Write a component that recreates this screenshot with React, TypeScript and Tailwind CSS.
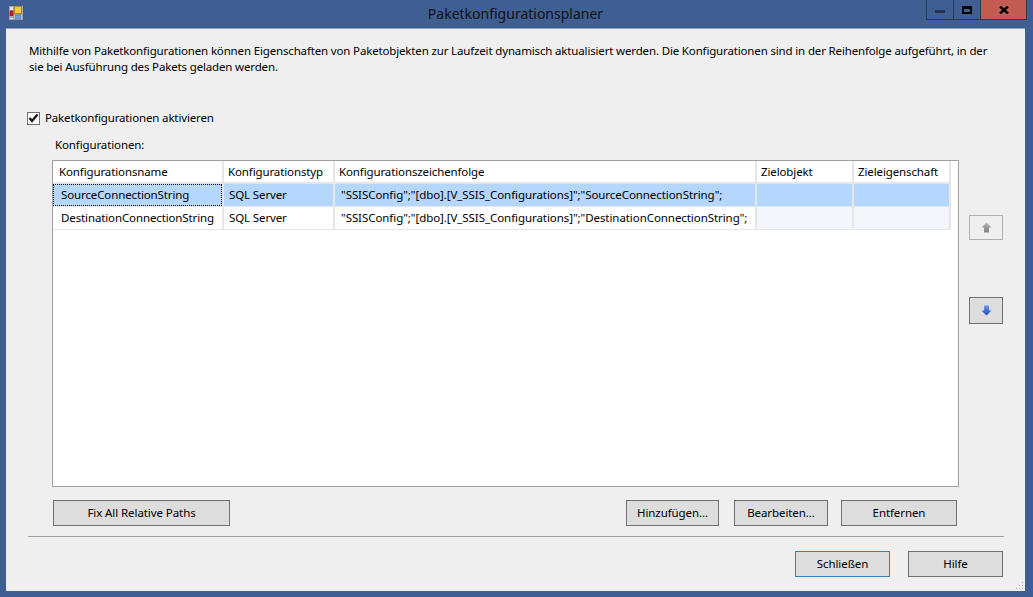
const font = { fontFamily: '"Noto Sans", sans-serif' }

const columns = [
  { label: 'Konfigurationsname', width: 'w-[171px]', head: 'pl-[6px]', cell: 'pl-[8px]' },
  { label: 'Konfigurationstyp', width: 'w-[111px]', head: 'pl-[4px]', cell: 'pl-[5px]' },
  { label: 'Konfigurationszeichenfolge', width: 'w-[422px]', head: 'pl-[4px]', cell: 'pl-[6px] tracking-[-0.065px]' },
  { label: 'Zielobjekt', width: 'w-[97px]', head: 'pl-[4px]', cell: 'pl-[6px]' },
  { label: 'Zieleigenschaft', width: 'w-[97px]', head: 'pl-[4px]', cell: 'pl-[6px]' },
]

const rows = [
  ['SourceConnectionString', 'SQL Server', '"SSISConfig";"[dbo].[V_SSIS_Configurations]";"SourceConnectionString";'],
  ['DestinationConnectionString', 'SQL Server', '"SSISConfig";"[dbo].[V_SSIS_Configurations]";"DestinationConnectionString";'],
]

function AppIcon() {
  return (
    <svg width="14" height="14" viewBox="0 0 14 14">
      <rect x="0.5" y="0.5" width="13" height="13" fill="#dfe3ea" stroke="#a3a3a3" />
      <path d="M0 4.5h5M0 11.5h5M4.5 0v14M5 8.5h9" stroke="#a3a3a3" />
      <rect x="5.5" y="0.5" width="7" height="7" fill="#f6c93a" stroke="#a98a2a" />
      <rect x="1" y="5" width="3" height="5" fill="#c8201c" stroke="#8a1a14" strokeWidth="0.6" />
      <rect x="6" y="9" width="6" height="4" fill="#6f9fe6" stroke="#4a78c0" strokeWidth="0.6" />
    </svg>
  )
}

function Arrow({ down, light, dark }: { down?: boolean; light: string; dark: string }) {
  const id = down ? 'arrow-down' : 'arrow-up'
  return (
    <svg width="11" height="11" viewBox="0 0 11 11" className={down ? 'rotate-180' : ''}>
      <defs>
        <linearGradient id={id} x1="0" y1={down ? '1' : '0'} x2="0" y2={down ? '0' : '1'}>
          <stop offset="0" stopColor={light} />
          <stop offset="1" stopColor={dark} />
        </linearGradient>
      </defs>
      <path d="M5.5 0.5 L10.5 5.5 L8 5.5 L8 10.5 L3 10.5 L3 5.5 L0.5 5.5 Z" fill={`url(#${id})`} />
    </svg>
  )
}

function Btn({ label, className, focused }: { label: string; className: string; focused?: boolean }) {
  return (
    <button className={`h-[26px] border bg-[#dddddd] tracking-[-0.08px] text-black ${focused ? 'border-[#3c7fb1]' : 'border-[#707070]'} ${className}`}>
      {label}
    </button>
  )
}

export default function App() {
  return (
    <div style={font} className="flex h-[597px] w-[1033px] flex-col bg-[#3f5f93] text-[11.5px] tracking-[-0.12px] text-black">
      <div className="flex h-[28px] shrink-0 items-start pl-[9px] pr-[6px]">
        <div className="mt-[6px]">
          <AppIcon />
        </div>
        <div className="mt-[5px] flex-1 pl-[82px] text-center text-[14px] leading-[18px] tracking-normal text-[#111]">Paketkonfigurationsplaner</div>
        <div className="flex h-[20px] border border-t-0 border-[#2c3a50]">
          <div className="flex w-[27px] items-center justify-center border-r border-[#2c3a50]">
            <div className="mt-[3px] h-[3px] w-[10px] bg-[#22324f]" />
          </div>
          <div className="flex w-[27px] items-center justify-center border-r border-[#2c3a50]">
            <div className="h-[8px] w-[10px] border-2 border-t-[3px] border-black" />
          </div>
          <div className="flex w-[45px] items-center justify-center bg-[#c25b50]">
            <svg width="10" height="8" viewBox="0 0 10 8">
              <path d="M1 0.5 L9 7.5 M9 0.5 L1 7.5" stroke="#000" strokeWidth="2.4" />
            </svg>
          </div>
        </div>
      </div>

      <div className="relative mx-[6px] mb-[6px] w-[1019px] flex-1 border-t border-[#8fa3c4] bg-[#efefef]">
        <p className="ml-[23px] mt-[14px] w-[975px] leading-[16px] tracking-[-0.155px]">
          Mithilfe von Paketkonfigurationen können Eigenschaften von Paketobjekten zur Laufzeit dynamisch aktualisiert werden. Die Konfigurationen sind in der Reihenfolge aufgeführt, in der sie bei Ausführung des Pakets geladen werden.
        </p>

        <label className="ml-[21px] mt-[36px] flex h-[14px] items-center gap-[5px] tracking-[-0.15px]">
          <span className="flex h-[13px] w-[13px] items-center justify-center border border-[#707070] bg-white">
            <svg width="11" height="11" viewBox="0 0 11 11">
              <path d="M1.5 5 L4 8 L9.5 1.5" fill="none" stroke="#1a1a1a" strokeWidth="2.4" />
            </svg>
          </span>
          Paketkonfigurationen aktivieren
        </label>

        <div className="ml-[49px] mt-[12px] leading-[16px]">Konfigurationen:</div>

        <div className="mt-[7px] flex">
          <div className="ml-[46px] h-[327px] w-[907px] border border-[#a0a0a0] bg-white">
            <div className="flex h-[23px] w-[898px]">
              {columns.map((c) => (
                <div key={c.label} className={`${c.width} ${c.head} border-b-2 border-r-2 border-[#e6e6e6] leading-[21px]`}>
                  {c.label}
                </div>
              ))}
            </div>
            {rows.map((row, i) => (
              <div key={row[0]} className="flex h-[23px] w-[898px] border-b border-[#e6e6e6]">
                {columns.map((c, j) => (
                  <div
                    key={c.label}
                    className={`${c.width} ${c.cell} relative whitespace-nowrap border-r-2 border-[#e6e6e6] leading-[22px] ${i === 0 ? 'bg-[#b5d7fd]' : j > 2 ? 'bg-[#f3f6fa]' : ''}`}
                  >
                    {row[j]}
                    {i === 0 && j === 0 && <div className="absolute inset-0 border border-dotted border-black" />}
                  </div>
                ))}
              </div>
            ))}
          </div>

          <div className="ml-[10px] flex flex-col">
            <button className="mt-[55px] flex h-[25px] w-[34px] items-center justify-center border border-[#b0b0b0] bg-[#efefef]">
              <Arrow light="#b4b4b4" dark="#808080" />
            </button>
            <button className="mt-[57px] flex h-[27px] w-[34px] items-center justify-center border border-[#707070] bg-[#dddddd]">
              <Arrow down light="#6d9bf0" dark="#1c48c8" />
            </button>
          </div>
        </div>

        <div className="ml-[47px] mt-[13px] flex w-[904px] gap-[15px]">
          <Btn label="Fix All Relative Paths" className="mr-auto w-[177px]" />
          <Btn label="Hinzufügen..." className="w-[93px]" />
          <Btn label="Bearbeiten..." className="-mr-[2px] w-[94px]" />
          <Btn label="Entfernen" className="w-[116px]" />
        </div>

        <div className="ml-[22px] mt-[10px] h-px w-[976px] bg-[#a0a0a0]" />

        <div className="ml-[789px] mt-[14px] flex gap-[18px]">
          <Btn label="Schließen" focused className="w-[95px]" />
          <Btn label="Hilfe" className="w-[95px]" />
        </div>

        <svg width="8" height="8" viewBox="0 0 8 8" className="absolute bottom-[1px] right-[1px]">
          <path d="M6 0h1v1H6zM6 3h1v1H6zM3 3h1v1H3zM6 6h1v1H6zM3 6h1v1H3zM0 6h1v1H0z" fill="#b0b0b0" />
        </svg>
      </div>
    </div>
  )
}
